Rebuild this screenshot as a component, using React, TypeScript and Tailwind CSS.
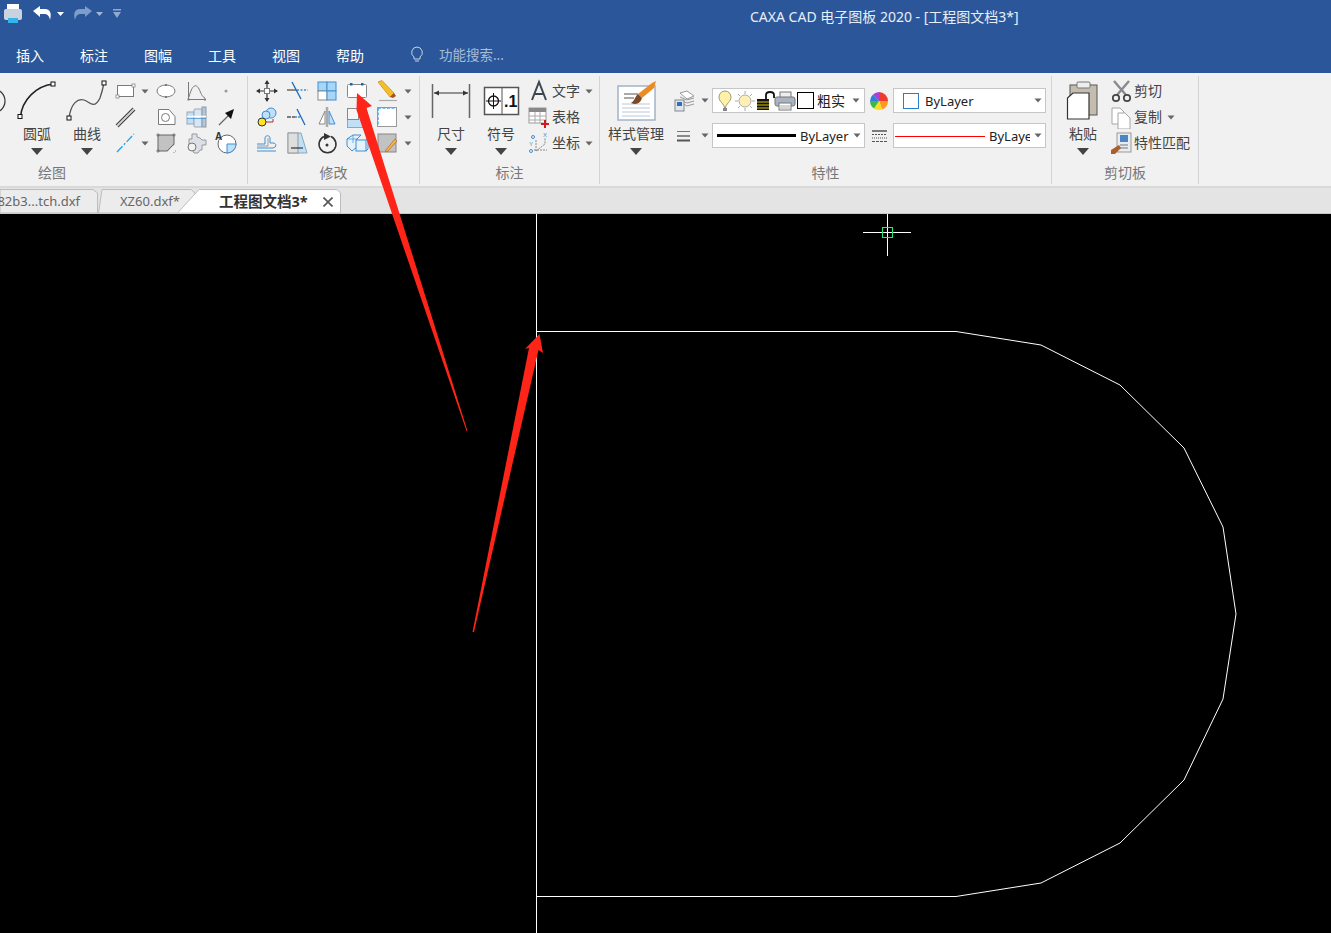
import React from "react";

const Ic = ({ children, w = 24, h = 24 }: { children: React.ReactNode; w?: number; h?: number }) => (
  <svg width={w} height={h} viewBox={`0 0 ${w} ${h}`} fill="none" className="block shrink-0">
    {children}
  </svg>
);

const Small = ({ className = "" }: { className?: string }) => (
  <svg width="8" height="5" viewBox="0 0 8 5" className={"block shrink-0 " + className}>
    <path d="M0.5 0.5H7.5L4 4.5Z" fill="#666" />
  </svg>
);
const Big = () => (
  <svg width="12" height="7" viewBox="0 0 12 7" className="block">
    <path d="M0 0H12L6 7Z" fill="#444" />
  </svg>
);

const G = "#7a7a7a";
const B = "#3f8fd6";
const L = "#bfe0f7";

const icons: Record<string, React.ReactNode> = {
  rect: (<><rect x="4.5" y="6.5" width="16" height="11" fill="#fff" stroke={G} /><rect x="3" y="16" width="3" height="3" fill="#fff" stroke={G} strokeWidth=".7" /><rect x="19" y="5" width="3" height="3" fill="#fff" stroke={G} strokeWidth=".7" /></>),
  ellipse: (<><ellipse cx="12" cy="12" rx="9" ry="6" fill="#fff" stroke={G} /><rect x="11" y="5" width="2" height="2" fill={G} /><rect x="11" y="17" width="2" height="2" fill={G} /></>),
  func: (<><path d="M4.5 3V20.5H22" stroke={G} /><path d="M5 18C8 6 12 4 15 10C17 14 18 18 21 19" stroke={G} /><rect x="3.5" y="19.5" width="2" height="2" fill={G} /><rect x="20" y="19.5" width="2" height="2" fill={G} /></>),
  point: (<circle cx="12" cy="12" r="1.5" fill="#999" />),
  dbl: (<><path d="M3 20L20 3" stroke="#444" strokeWidth="1.1" /><path d="M5 22L22 5" stroke="#444" strokeWidth="1.1" /><path d="M4 21L21 4" stroke="#ccc" strokeWidth="1.5" /></>),
  poly: (<><path d="M4.5 4.5H15L21 11.5V19.5H4.5Z" fill="#fff" stroke={G} /><circle cx="11.5" cy="12.5" r="4" stroke={G} /></>),
  shaft: (<><rect x="3" y="7" width="7" height="12" fill={L} stroke="#9aa8b8" /><rect x="10" y="4" width="8" height="18" rx="1" fill="#d6e6f3" stroke="#9aa8b8" /><rect x="18" y="2" width="4" height="20" fill="#b9c4d1" stroke="#8a9bb0" /><path d="M3 11.5H22" stroke="#fff" strokeWidth="1.5" /><path d="M3 13.5H22" stroke={B} strokeWidth=".7" /></>),
  arrow: (<><path d="M5 20L16 9" stroke="#666" strokeWidth="1.2" /><path d="M20 4L17 14L14 11L11 8Z" fill="#111" /></>),
  center: (<path d="M4 21L21 3" stroke="#1ea5ea" strokeWidth="1.3" strokeDasharray="8 2 2 2" />),
  hatch: (<><rect x="4" y="4" width="16" height="16" fill="#c2c2c2" stroke="#666" /><path d="M2 4H6M2 20H6M18 4H22M18 20H22M4 2V6M20 2V6M4 18V22M20 18V22" stroke="#666" strokeWidth=".7" /><path d="M13 21L21 13V21Z" fill="#f1f1f1" /><path d="M13 20L20 13" stroke="#666" /></>),
  gear: (<><path d="M8 3H13V6L16 7L18 9L22 9V14L18 14L18 19H16L14 22H10L8 18H5V8H8Z" fill="#dde1e7" stroke="#999" /><circle cx="8" cy="16" r="4" fill="#f1f1f1" stroke="#777" /></>),
  areaA: (<><circle cx="13" cy="13" r="9" fill="#fff" stroke="#666" /><path d="M13 13H22A9 9 0 0 1 13 22Z" fill={L} stroke={B} /><text x="1" y="9" fontSize="10" fontWeight="700" fill="#333" fontFamily="Liberation Sans">A</text></>),
  move: (<><path d="M12 2V22M2 12H22" stroke="#333" strokeWidth="1.2" /><rect x="9.5" y="9.5" width="5" height="5" fill="#fff" stroke="#777" /><path d="M12 1L9.5 5H14.5ZM12 23L9.5 19H14.5ZM1 12L5 9.5V14.5ZM23 12L19 9.5V14.5Z" fill="#333" /></>),
  trim: (<><path d="M2 11H11" stroke="#555" strokeWidth="1.3" /><path d="M12 11H23" stroke={B} strokeWidth="1.3" strokeDasharray="2 1.5" /><path d="M7 3L16 20" stroke="#1668b8" strokeWidth="1.3" /></>),
  array: (<><rect x="3" y="3" width="9" height="9" fill="#a8d6f5" stroke={B} /><rect x="12" y="3" width="9" height="9" fill="#a8d6f5" stroke={B} /><rect x="3" y="12" width="9" height="9" fill="#fff" stroke="#888" /><rect x="12" y="12" width="9" height="9" fill="#a8d6f5" stroke={B} /></>),
  fillet: (<><rect x="2.5" y="5.5" width="19" height="13" rx="1" fill="#fff" stroke="#888" /><rect x="5" y="4" width="2.5" height="2.5" fill="#1668b8" /><rect x="16" y="4" width="2.5" height="2.5" fill="#1668b8" /></>),
  pencil: (<><path d="M3 3L7 1.5L19 14L15 18Z" fill="#f5bd2a" stroke="#c98a10" strokeWidth=".7" /><path d="M15 18L19 14L21 17L18 19Z" fill="#a0522d" /><path d="M4 21.5H22" stroke="#aaa" strokeWidth="1.2" /></>),
  offset: (<><circle cx="16" cy="8" r="5" fill={L} stroke={B} /><circle cx="11" cy="10" r="4" fill={L} stroke={B} /><circle cx="7" cy="17" r="4" fill="#ffe51f" stroke="#333" /><path d="M11 17H18V14" stroke="#a33" strokeWidth="1" /></>),
  extend: (<><path d="M2 12H10" stroke="#555" strokeWidth="1.3" strokeDasharray="4 1" /><path d="M10 12H15" stroke={B} strokeWidth="1.3" strokeDasharray="2 1" /><path d="M12 4L20 20" stroke="#1668b8" strokeWidth="1.3" /></>),
  mirror: (<><path d="M10 6L4 19H10Z" fill="#fff" stroke="#888" /><path d="M14 6L20 19H14Z" fill={L} stroke={B} /><path d="M12 2V22" stroke="#aaa" strokeWidth="2.5" /></>),
  scale: (<><rect x="2.5" y="3.5" width="19" height="19" fill={L} stroke="#8ab" /><rect x="2.5" y="3.5" width="11" height="11" fill="#f5f5f5" stroke="#888" /></>),
  dash: (<><rect x="2.5" y="2.5" width="19" height="19" fill="#fff" stroke="#999" /><path d="M3 3H21M3 3V21" stroke="#5aa7e6" strokeWidth="1.5" strokeDasharray="3 1.5" /></>),
  wave: (<><path d="M2 20H21M2 17H17C22 17 22 12 18 12H15V7C15 4 10 4 10 7V13H2" stroke={B} strokeWidth="1" /><path d="M2 15H13V7" stroke="#888" strokeWidth=".8" /></>),
  stretch: (<><path d="M3 2H16L22 22H3Z" fill={L} stroke="#8ab" /><rect x="3" y="2" width="10" height="20" fill="#dedede" stroke="#999" /><path d="M6 17H18" stroke="#333" strokeWidth="1.2" /></>),
  rotate: (<><path d="M9 5.5A8.5 8.5 0 1 0 16 5.5" stroke="#333" strokeWidth="1.5" /><path d="M9 2L16 5.5L9 9Z" fill="#333" /><circle cx="12" cy="14" r="1.5" fill="#333" /></>),
  boxes: (<><path d="M2 8L8 4H16L12 8V16L7 20L2 15Z" fill="#e4f2fb" stroke={B} /><path d="M8 4V12M2 8H12" stroke={B} strokeWidth=".7" /><rect x="11" y="9" width="10" height="11" fill="#e4f2fb" stroke={B} /><path d="M21 9L23 7V18L21 20" stroke={B} /></>),
  hatchEdit: (<><rect x="3" y="3" width="18" height="18" fill="#c2c2c2" stroke="#888" /><path d="M10 20L20 8L22 10L12 21Z" fill="#f1b93a" stroke="#a33" strokeWidth=".5" /></>),
  letterA: (<path d="M5 21L12 3L19 21M8 15H16" stroke="#3c4650" strokeWidth="2" />),
  table: (<><rect x="2" y="3" width="17" height="15" fill="#fff" stroke="#999" /><rect x="2" y="3" width="17" height="4" fill="#888" /><path d="M2 11H19M2 15H19M8 7V18M13 7V18" stroke="#aaa" /><path d="M18 15V23M14 19H22" stroke="#d21a1a" strokeWidth="2" /></>),
  coord: (<><path d="M9 20L18 13V7" stroke="#888" strokeDasharray="2 1" /><path d="M7 19H20" stroke="#888" strokeDasharray="2 1" /><path d="M9 20V9" stroke="#888" strokeDasharray="2 1" /><text x="2" y="15" fontSize="6" fill={B} fontFamily="Liberation Sans">Y</text><text x="16" y="6" fontSize="6" fill={B} fontFamily="Liberation Sans">X</text><circle cx="4" cy="20" r="1.5" stroke={B} /><circle cx="6" cy="6" r="1.5" stroke={B} /></>),
  layers: (<><path d="M8 4L15 2L22 7L15 10Z" fill="#fff" stroke="#999" /><path d="M8 8L15 11L22 9M8 11L15 14L22 12M10 14L15 17L22 15" stroke="#999" /><rect x="3" y="11" width="9" height="11" fill="#dfe6ee" stroke="#888" /><rect x="5" y="13" width="5" height="4" fill="#2f6fb5" /></>),
  lines: (<><path d="M5 7.5H18" stroke="#777" strokeWidth="1" /><path d="M5 12H18" stroke="#666" strokeWidth="1.5" /><path d="M5 16.5H18" stroke="#555" strokeWidth="2" /></>),
  bulb: (<><path d="M12 20C11 14 6 13 6 8A6 6 0 0 1 18 8C18 13 13 14 12 20Z" fill="#fff2a8" stroke="#9a9a70" /><rect x="10" y="19" width="4" height="3" fill="#888" /></>),
  sun: (<><circle cx="12" cy="12" r="6" fill="#ffefb5" stroke="#aaa" /><path d="M12 2V5M12 19V22M2 12H5M19 12H22M5 5L7 7M17 17L19 19M19 5L17 7M5 19L7 17" stroke="#aaa" /></>),
  lock: (<><rect x="4" y="10" width="12" height="11" fill="#111" /><path d="M4 13H16M4 16H16M4 19H16" stroke="#d8c800" /><path d="M13 10V6C13 2 21 2 21 6V9" stroke="#111" strokeWidth="1.8" /></>),
  print: (<><rect x="7" y="3" width="11" height="6" fill="#eee" stroke="#777" /><rect x="2" y="8" width="20" height="9" rx="2" fill="#aab4c0" stroke="#777" /><rect x="6" y="14" width="12" height="7" fill="#fff" stroke="#777" /><path d="M7 17H17M7 19H17" stroke="#aaa" /></>),
  wheel: (<><path d="M12 12L12 3A9 9 0 0 1 21 12Z" fill="#ef3b2d" /><path d="M12 12H21A9 9 0 0 1 15 20.5Z" fill="#ff9a1f" /><path d="M12 12L15 20.5A9 9 0 0 1 7 19.5Z" fill="#f5e11d" /><path d="M12 12L7 19.5A9 9 0 0 1 3 12Z" fill="#3fb54a" /><path d="M12 12H3A9 9 0 0 1 6 5.5Z" fill="#2f7fd6" /><path d="M12 12L6 5.5A9 9 0 0 1 12 3Z" fill="#a642d9" /></>),
  ltype: (<><path d="M5 7H20" stroke="#555" strokeWidth="1.5" /><path d="M5 10.5H20" stroke="#555" strokeWidth="1.2" strokeDasharray="2 1" /><path d="M5 14H20" stroke="#555" strokeWidth="1.2" strokeDasharray="1 1" /><path d="M5 17.5H20" stroke="#555" strokeDasharray="3 1" /></>),
  scissors: (<><path d="M5 2L17 16M20 2L8 16" stroke="#8a8a8a" strokeWidth="2.4" /><circle cx="7" cy="19" r="3.2" stroke="#444" strokeWidth="1.7" /><circle cx="18" cy="19" r="3.2" stroke="#444" strokeWidth="1.7" /></>),
  copy: (<><path d="M3 3H11L15 7V19H3Z" fill="#fff" stroke="#a5a5a5" /><path d="M9 8H16L21 13V24H9Z" fill="#fff" stroke="#a5a5a5" /></>),
  match: (<><rect x="8" y="2" width="14" height="19" fill="#e8edf2" stroke="#999" /><rect x="11" y="4" width="8" height="7" fill="#4a86c5" /><path d="M11 14H19M11 17H19" stroke="#777" /><path d="M2 19L10 14L12 17L6 23H2Z" fill="#a9602a" /></>),
};

const I = ({ n }: { n: string }) => <Ic>{icons[n]}</Ic>;

const Cell = ({ n, w = "w-[30px]" }: { n: string; w?: string }) => (
  <div className={`${w} h-[26px] flex items-center justify-center`}>
    <I n={n} />
  </div>
);

const ArrowCell = ({ w = "w-[12px]" }: { w?: string }) => (
  <div className={`${w} h-[26px] flex items-center justify-center`}>
    <Small />
  </div>
);

const Large = ({ w, label, children }: { w: string; label: string; children: React.ReactNode }) => (
  <div className={`${w} flex flex-col items-center shrink-0`}>
    <div className="h-[45px] w-full">{children}</div>
    <div className="h-[22px] leading-[22px] text-[14px] text-[#444] whitespace-nowrap">{label}</div>
    <div className="mt-[3px]"><Big /></div>
  </div>
);

const Group = ({ w, label, lw = "", children }: { w: string; label: string; lw?: string; children: React.ReactNode }) => (
  <div className={`${w} h-[108px] mt-[3px] border-r border-[#d4d4d4] flex flex-col shrink-0 box-content`}>
    <div className="h-[86px] pt-[2px] flex items-start">{children}</div>
    <div className={`h-[22px] leading-[22px] text-center text-[14px] text-[#777] ${lw}`}>{label}</div>
  </div>
);

const TextRow = ({ n, t, arrow }: { n: string; t: string; arrow?: boolean }) => (
  <div className="h-[26px] flex items-center">
    <div className="w-[26px] flex justify-center"><I n={n} /></div>
    <span className="text-[14px] leading-[20px] text-[#444] whitespace-nowrap">{t}</span>
    {arrow && <Small className="ml-[5px]" />}
  </div>
);

const Combo = ({ w, children }: { w: string; children: React.ReactNode }) => (
  <div className={`${w} h-[25px] bg-white border border-[#c6c6c6] flex items-center shrink-0 overflow-hidden`}>
    {children}
  </div>
);

const Square = ({ x }: { x: string }) => <span className={`block shrink-0 ${x}`} />;

export default function App() {
  return (
    <div className="relative w-[1331px] h-[933px] overflow-hidden bg-black font-['Noto_Sans','Noto_Sans_CJK_SC',sans-serif]">
      <div className="h-[73px] bg-[#2b579a] flex flex-col text-white">
        <div className="h-[34px] relative flex items-start">
          <div className="flex items-center pl-[1px] h-[28px]">
            <svg width="24" height="24" viewBox="0 0 24 24" className="block">
              <rect x="6" y="2" width="12" height="7" fill="#fff" />
              <rect x="3" y="7" width="18" height="11" rx="2" fill="#c9d2de" />
              <rect x="7" y="16" width="10" height="5" fill="#35b4ea" />
            </svg>
            <svg width="22" height="18" viewBox="0 0 22 18" className="block ml-[7px]">
              <path d="M1 6L8 1V4H13C18 4 20 8 18 15C17 10 15 9 12 9H8V12Z" fill="#fff" />
            </svg>
            <svg width="7" height="4" className="block ml-[3px]"><path d="M0 0H7L3.5 4Z" fill="#fff" /></svg>
            <svg width="22" height="18" viewBox="0 0 22 18" className="block ml-[7px]">
              <path d="M21 6L14 1V4H9C4 4 2 8 4 15C5 10 7 9 10 9H14V12Z" fill="#7f9dc9" />
            </svg>
            <svg width="7" height="4" className="block ml-[3px]"><path d="M0 0H7L3.5 4Z" fill="#9fb5d6" /></svg>
            <svg width="8" height="10" className="block ml-[10px]"><path d="M0 0H8V1.5H0ZM0 3H8L4 9Z" fill="#8fa9cf" /></svg>
          </div>
          <div className="absolute left-[750px] top-[8px] text-[14px] leading-[18px] text-[#e8eef7] whitespace-nowrap">
            CAXA CAD 电子图板 2020 - [工程图文档3*]
          </div>
        </div>
        <div className="h-[39px] flex items-center pl-[16px] pt-[3px] text-[14px]">
          {["插入", "标注", "图幅", "工具", "视图", "帮助"].map((m) => (
            <span key={m} className="w-[64px] shrink-0">{m}</span>
          ))}
          <svg width="16" height="18" viewBox="0 0 16 18" className="block ml-[9px] shrink-0">
            <path d="M8 1A5.5 5.5 0 0 0 5 11V13H11V11A5.5 5.5 0 0 0 8 1Z" fill="none" stroke="#c5d3e6" />
            <path d="M6 15H10" stroke="#c5d3e6" />
          </svg>
          <span className="ml-[14px] text-[13.5px] text-[#a9bdd9] whitespace-nowrap">功能搜索...</span>
        </div>
      </div>

      <div className="h-[115px] bg-[#f1f1f1] border-b-2 border-[#d9d9d9] flex box-border">
        <Group w="w-[247px]" label="绘图" lw="w-[104px]">
          <svg width="12" height="44" viewBox="0 0 12 44" className="block shrink-0">
            <circle cx="-7" cy="23" r="12" stroke="#333" strokeWidth="1.2" fill="none" />
          </svg>
          <Large w="w-[50px]" label="圆弧">
            <svg width="50" height="44" viewBox="0 0 50 44" fill="none" className="block">
              <path d="M8.5 39C10 22 24 8 41 6" stroke="#222" strokeWidth="1.5" />
              <rect x="6" y="36.5" width="4" height="4" fill="#fff" stroke="#111" />
              <rect x="39" y="4" width="4" height="4" fill="#fff" stroke="#111" />
            </svg>
          </Large>
          <Large w="w-[50px]" label="曲线">
            <svg width="50" height="44" viewBox="0 0 50 44" fill="none" className="block">
              <path d="M7 40C9 25 16 20 22 22C28 24 32 32 38 20C40 14 41 10 42 5" stroke="#555" strokeWidth="1.3" />
              <rect x="5" y="38" width="4" height="4" fill="#fff" stroke="#111" />
              <rect x="40" y="3" width="4" height="4" fill="#fff" stroke="#111" />
            </svg>
          </Large>
          <div className="flex flex-col w-[40px] shrink-0">
            <div className="flex"><Cell n="rect" w="w-[26px]" /><ArrowCell w="w-[14px]" /></div>
            <div className="flex"><Cell n="dbl" w="w-[26px]" /></div>
            <div className="flex"><Cell n="center" w="w-[26px]" /><ArrowCell w="w-[14px]" /></div>
          </div>
          <div className="grid grid-cols-[30px_30px_30px] grid-rows-[26px_26px_26px] ml-[-1px]">
            {["ellipse", "func", "point", "poly", "shaft", "arrow", "hatch", "gear", "areaA"].map((n) => (
              <Cell key={n} n={n} />
            ))}
          </div>
        </Group>

        <Group w="w-[171px]" label="修改">
          <div className="grid grid-cols-[30px_30px_30px_30px_30px_12px] grid-rows-[26px_26px_26px] ml-[4px]">
            <Cell n="move" /><Cell n="trim" /><Cell n="array" /><Cell n="fillet" /><Cell n="pencil" /><ArrowCell />
            <Cell n="offset" /><Cell n="extend" /><Cell n="mirror" /><Cell n="scale" /><Cell n="dash" /><ArrowCell />
            <Cell n="wave" /><Cell n="stretch" /><Cell n="rotate" /><Cell n="boxes" /><Cell n="hatchEdit" /><ArrowCell />
          </div>
        </Group>

        <Group w="w-[179px]" label="标注">
          <div className="w-[6px] shrink-0" />
          <Large w="w-[50px]" label="尺寸">
            <svg width="50" height="44" viewBox="0 0 50 44" fill="none" className="block">
              <path d="M6.5 6V40M43.5 6V40" stroke="#666" strokeWidth="1.5" />
              <path d="M8 15H42" stroke="#333" />
              <path d="M8 15L13 12.5V17.5ZM42 15L37 12.5V17.5Z" fill="#333" />
            </svg>
          </Large>
          <Large w="w-[50px]" label="符号">
            <svg width="50" height="44" viewBox="0 0 50 44" fill="none" className="block">
              <rect x="8.5" y="9.5" width="34" height="27" fill="#fff" stroke="#555" strokeWidth="1.5" />
              <path d="M26 10V36" stroke="#555" />
              <circle cx="17.5" cy="23" r="5" stroke="#111" strokeWidth="1.3" />
              <path d="M10 23H25M17.5 15V31" stroke="#111" />
              <text x="28" y="29" fontSize="16" fontWeight="700" fill="#111" fontFamily="Liberation Sans">.1</text>
            </svg>
          </Large>
          <div className="flex flex-col shrink-0">
            <TextRow n="letterA" t="文字" arrow />
            <TextRow n="table" t="表格" />
            <TextRow n="coord" t="坐标" arrow />
          </div>
        </Group>

        <Group w="w-[451px]" label="特性">
          <Large w="w-[72px]" label="样式管理">
            <svg width="72" height="44" viewBox="0 0 72 44" fill="none" className="block">
              <rect x="18" y="8" width="37" height="34" fill="#fff" stroke="#9fb4c8" strokeWidth="1.5" />
              <path d="M22 26H50M22 30H50M22 34H50M22 38H50" stroke="#b9c8d8" />
              <path d="M24 16H38M24 20H34" stroke="#555" />
              <path d="M52 5L56 3L54 10L42 20L38 16Z" fill="#ee8a22" />
              <path d="M42 20C40 26 36 27 31 25C35 23 35 18 38 16Z" fill="#7a4a2a" />
            </svg>
          </Large>
          <div className="flex flex-col gap-[10px] pt-[10px]">
            <div className="flex items-center h-[25px]">
              <div className="w-[24px] flex justify-center"><I n="layers" /></div>
              <Small className="ml-[5px] mr-[3px]" />
              <Combo w="w-[153px]">
                <div className="flex items-center pl-[2px] w-full">
                  <div className="w-[20px] flex justify-center"><I n="bulb" /></div>
                  <div className="w-[20px] flex justify-center"><I n="sun" /></div>
                  <div className="w-[20px] flex justify-center"><I n="lock" /></div>
                  <div className="w-[20px] flex justify-center"><I n="print" /></div>
                  <Square x="w-[17px] h-[17px] bg-white border border-black ml-[2px]" />
                  <span className="text-[14px] text-[#222] ml-[3px] whitespace-nowrap">粗实</span>
                  <Small className="ml-[7px]" />
                </div>
              </Combo>
              <div className="w-[28px] flex justify-center"><I n="wheel" /></div>
              <Combo w="w-[153px]">
                <Square x="w-[16px] h-[16px] border border-[#2c7cc8] ml-[9px]" />
                <span className="text-[13px] text-[#222] ml-[6px] pt-[2px]">ByLayer</span>
                <Small className="ml-auto mr-[3px]" />
              </Combo>
            </div>
            <div className="flex items-center h-[25px]">
              <div className="w-[24px] flex justify-center"><I n="lines" /></div>
              <Small className="ml-[5px] mr-[3px]" />
              <Combo w="w-[153px]">
                <span className="block w-[79px] h-[3px] bg-black ml-[4px] shrink-0" />
                <span className="text-[13px] text-[#222] ml-[4px] pt-[2px]">ByLayer</span>
                <Small className="ml-auto mr-[3px]" />
              </Combo>
              <div className="w-[28px] flex justify-center"><I n="ltype" /></div>
              <Combo w="w-[153px]">
                <span className="block w-[90px] h-[1px] bg-[#ff0000] ml-[1px] mt-[2px] shrink-0" />
                <span className="block w-[41px] overflow-hidden text-[13px] text-[#222] ml-[4px] pt-[2px] whitespace-nowrap">ByLayer</span>
                <Small className="ml-auto mr-[3px]" />
              </Combo>
            </div>
          </div>
        </Group>

        <Group w="w-[146px]" label="剪切板">
          <div className="w-[6px] shrink-0" />
          <Large w="w-[50px]" label="粘贴">
            <svg width="50" height="44" viewBox="0 0 50 44" fill="none" className="block">
              <rect x="12" y="7" width="27" height="30" fill="#c5bcb0" stroke="#555" />
              <rect x="19" y="4" width="13" height="6" rx="1" fill="#eee" stroke="#777" />
              <path d="M9.5 20L15 15H31V41H9.5Z" fill="#fff" stroke="#333" strokeWidth="1.2" />
            </svg>
          </Large>
          <div className="flex flex-col shrink-0">
            <TextRow n="scissors" t="剪切" />
            <TextRow n="copy" t="复制" arrow />
            <TextRow n="match" t="特性匹配" />
          </div>
        </Group>
      </div>

      <div className="h-[26px] bg-[#e4e4e4] flex items-end border-b border-[#c8c8c8]">
        <div className="relative h-[24px] w-[98px] shrink-0">
          <svg width="98" height="24" className="absolute inset-0"><path d="M0 .5H93L97.5 4V24H0Z" fill="#ececec" stroke="#bdbdbd" /></svg>
          <span className="absolute right-[18px] top-[3px] text-[13px] text-[#666] whitespace-nowrap">82b3...tch.dxf</span>
        </div>
        <div className="relative h-[24px] w-[98px] shrink-0">
          <svg width="98" height="24" className="absolute inset-0"><path d="M.5 24L4 .5H93L97 4V24Z" fill="#ececec" stroke="#bdbdbd" /></svg>
          <span className="absolute left-[22px] top-[3px] text-[13px] text-[#666] whitespace-nowrap">XZ60.dxf*</span>
        </div>
        <div className="relative h-[24px] w-[164px] shrink-0 ml-[-19px]">
          <svg width="164" height="24" className="absolute inset-0"><path d="M.5 24L22 .5H160L163.5 4V24Z" fill="#fff" stroke="#bdbdbd" /></svg>
          <span className="absolute left-[42px] top-[2px] text-[14.5px] font-bold text-[#333] whitespace-nowrap">工程图文档3*</span>
          <svg width="10" height="10" viewBox="0 0 10 10" className="absolute left-[146px] top-[8px]"><path d="M.5 .5L9.5 9.5M9.5 .5L.5 9.5" stroke="#555" strokeWidth="1.6" /></svg>
        </div>
      </div>

      <svg width="1331" height="719" viewBox="0 214 1331 719" fill="none" className="block bg-black">
        <path d="M536.5 214V933" stroke="#fff" />
        <path d="M536 331.5H956L1041 345L1120 385L1184 448L1223 527L1236 614L1223 699L1184 780L1120 843L1041 883L956 896.5H536" stroke="#fff" />
        <path d="M863 232.5H911M887.5 214V256" stroke="#fff" />
        <rect x="882.5" y="227.5" width="10" height="10" stroke="#22ee77" />
      </svg>

      <svg width="1331" height="933" viewBox="0 0 1331 933" className="absolute inset-0 pointer-events-none">
        <path d="M357 93L372 106L366.5 108L467.5 431L466.5 431L356.5 110Z" fill="#ff2418" />
        <path d="M539.5 334L543 353L538.5 350L474 632L472.5 632L529 348L525 349Z" fill="#ff2418" />
      </svg>
    </div>
  );
}
